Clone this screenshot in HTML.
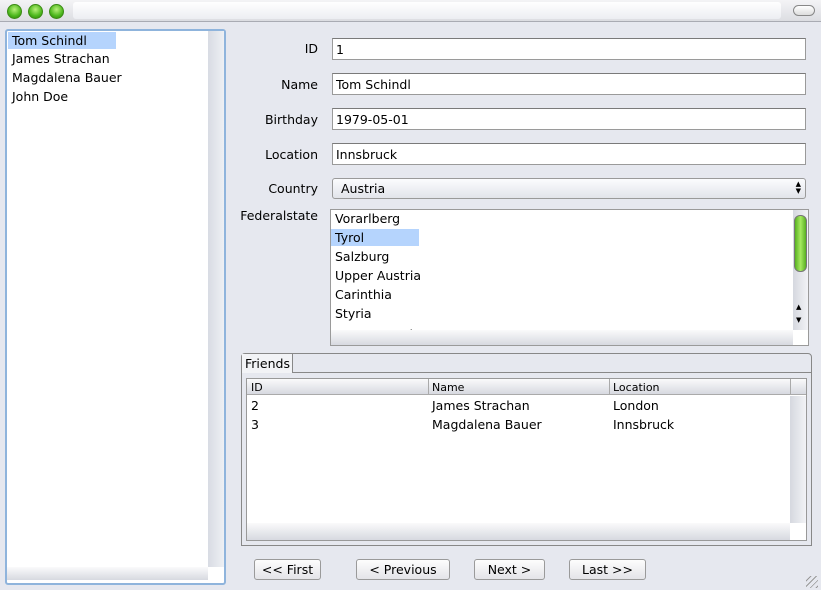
<!DOCTYPE html><html><head><style>
*{margin:0;padding:0;box-sizing:border-box}
body{width:821px;height:590px;background:#e6e8ef;position:relative;overflow:hidden;font-family:"DejaVu Sans","Liberation Sans",sans-serif;font-size:12px;color:#000}
div,span{position:absolute}
.lbl{right:503px;text-align:right;font-size:12.5px}
.tf{left:332px;width:474px;height:22px;background:#fff;border:1px solid #9a9a9a;border-top-color:#7a7a7a;padding:3px 0 0 3px;font-size:12.5px}
.btn{top:559px;height:21px;border:1px solid #9a9a9a;border-radius:3px;background:linear-gradient(#fdfdfd,#e4e4e8);text-align:center;font-size:12.5px;line-height:19px}
.dot{width:15px;height:15px;border-radius:50%;top:4px;background:radial-gradient(circle at 50% 35%,#b8f07a,#4cb71c 60%,#2d7d0c);border:1px solid #3c8a15}
.hs{background:linear-gradient(#fafafb,#d7d9e0)}
</style></head><body>
<div style="left:0;top:0;width:821px;height:22px;background:linear-gradient(#f4f4f6,#dcdde2);border-bottom:1px solid #a9abb3"></div>
<div style="left:73px;top:2px;width:708px;height:17px;background:linear-gradient(#ffffff,#eceef2);border-radius:3px"></div>
<div style="left:793px;top:5px;width:22px;height:11px;border:1px solid #888;border-radius:6px;background:linear-gradient(#fff,#ddd)"></div>
<div class="dot" style="left:7px"></div><div class="dot" style="left:28px"></div><div class="dot" style="left:49px"></div>

<div style="left:5px;top:29px;width:221px;height:556px;border:2px solid #8fb4dc;border-radius:3px;background:#fff"></div>
<div style="left:208px;top:31px;width:16px;height:536px;background:linear-gradient(90deg,#d8dbe3,#eef0f4)"></div>
<div class="hs" style="left:7px;top:567px;width:201px;height:13px"></div>
<div style="left:8px;top:32px;width:108px;height:17px;background:#b5d4fd"></div>
<div style="left:12px;top:33px;font-size:12.5px">Tom Schindl</div>
<div style="left:12px;top:51px;font-size:12.5px">James Strachan</div>
<div style="left:12px;top:70px;font-size:12.5px">Magdalena Bauer</div>
<div style="left:12px;top:89px;font-size:12.5px">John Doe</div>

<div class="lbl" style="top:41px">ID</div>
<div class="lbl" style="top:77px">Name</div>
<div class="lbl" style="top:112px">Birthday</div>
<div class="lbl" style="top:147px">Location</div>
<div class="lbl" style="top:181px">Country</div>
<div class="lbl" style="top:208px">Federalstate</div>
<div class="tf" style="top:38px">1</div>
<div class="tf" style="top:73px">Tom Schindl</div>
<div class="tf" style="top:108px">1979-05-01</div>
<div class="tf" style="top:143px">Innsbruck</div>
<div style="left:332px;top:178px;width:474px;height:21px;border:1px solid #9a9a9a;border-radius:3px;background:linear-gradient(#fbfcfe,#e2e4ea);padding:2px 0 0 8px;font-size:12.5px">Austria<span style="right:4px;top:2px;font-size:7px;line-height:7px">▲<br>▼</span></div>

<div style="left:330px;top:209px;width:479px;height:137px;border:1px solid #9a9a9a;background:#fff;overflow:hidden"><span style="left:4px;top:117px;font-size:12.5px">Lower Austria</span></div>
<div class="hs" style="left:331px;top:330px;width:462px;height:15px"></div>
<div style="left:793px;top:210px;width:15px;height:120px;background:linear-gradient(90deg,#d5d8df,#f2f3f6)"></div>
<div style="left:794px;top:215px;width:13px;height:57px;border:1px solid #777;border-radius:6px;background:linear-gradient(90deg,#58b021,#a6ea60,#58b021)"></div>
<div style="left:796px;top:301px;font-size:7px;line-height:13px">▲<br>▼</div>
<div style="left:331px;top:229px;width:88px;height:17px;background:#b5d4fd"></div>
<div style="left:335px;top:209px;font-size:12.5px;line-height:19px">Vorarlberg<br>Tyrol<br>Salzburg<br>Upper Austria<br>Carinthia<br>Styria</div>

<div style="left:241px;top:353px;width:571px;height:193px;border:1px solid #888;border-radius:4px 4px 0 0;background:#e6e8ef"></div>
<div style="left:241px;top:372px;width:571px;height:1px;background:#888"></div>
<div style="left:242px;top:354px;width:51px;height:19px;border-right:1px solid #888;background:#f2f3f6;padding:2px 0 0 3px;font-size:12.5px">Friends</div>
<div style="left:246px;top:378px;width:561px;height:163px;border:1px solid #999;background:#fff"></div>
<div class="hs" style="left:247px;top:379px;width:559px;height:16px;border-bottom:1px solid #aaa"></div>
<div style="left:428px;top:379px;width:1px;height:16px;background:#aaa"></div>
<div style="left:609px;top:379px;width:1px;height:16px;background:#aaa"></div>
<div style="left:790px;top:379px;width:1px;height:16px;background:#aaa"></div>
<div style="left:790px;top:396px;width:16px;height:127px;background:linear-gradient(90deg,#d5d8df,#f2f3f6)"></div>
<div class="hs" style="left:247px;top:523px;width:543px;height:17px"></div>
<div style="left:251px;top:381px;font-size:11px">ID</div>
<div style="left:432px;top:381px;font-size:11px">Name</div>
<div style="left:613px;top:381px;font-size:11px">Location</div>
<div style="left:251px;top:396px;font-size:12.5px;line-height:19px">2<br>3</div>
<div style="left:432px;top:396px;font-size:12.5px;line-height:19px">James Strachan<br>Magdalena Bauer</div>
<div style="left:613px;top:396px;font-size:12.5px;line-height:19px">London<br>Innsbruck</div>

<div class="btn" style="left:254px;width:67px">&lt;&lt; First</div>
<div class="btn" style="left:356px;width:94px">&lt; Previous</div>
<div class="btn" style="left:474px;width:71px">Next &gt;</div>
<div class="btn" style="left:569px;width:77px">Last &gt;&gt;</div>
<div style="left:806px;top:576px;width:12px;height:12px;background:repeating-linear-gradient(135deg,transparent 0 3px,#999 3px 4px)"></div>
</body></html>
